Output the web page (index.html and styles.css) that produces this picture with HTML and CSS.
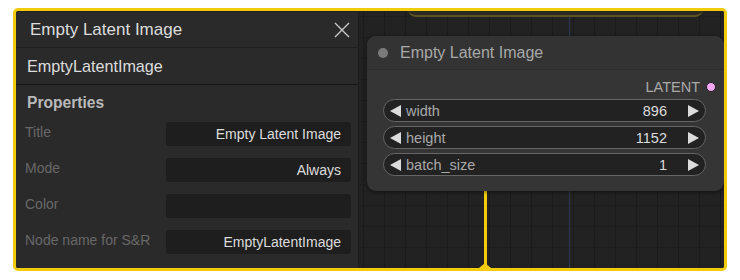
FILE: index.html
```html
<!DOCTYPE html>
<html>
  <head>
    <title>Empty Latent Image</title>
    <link rel="stylesheet" href="styles.css">
  </head>
  <body>
    <div class="frame">
      <div class="panel">
        <div class="panel-head">
          <span class="panel-title">Empty Latent Image</span>
          <svg class="close" width="16" height="16" viewBox="0 0 16 16">
            <path d="M1 1 L15 15 M15 1 L1 15" stroke="#c8c8c8" stroke-width="1.4" fill="none"/>
          </svg>
        </div>
        <div class="panel-type">EmptyLatentImage</div>
        <div class="panel-section">Properties</div>
        <div class="prop-list">
          <div class="prop-row">
            <div class="prop-label">Title</div>
            <div class="prop-value">Empty Latent Image</div>
          </div>
          <div class="prop-row">
            <div class="prop-label">Mode</div>
            <div class="prop-value">Always</div>
          </div>
          <div class="prop-row">
            <div class="prop-label">Color</div>
            <div class="prop-value"></div>
          </div>
          <div class="prop-row">
            <div class="prop-label">Node name for S&amp;R</div>
            <div class="prop-value">EmptyLatentImage</div>
          </div>
        </div>
      </div>

      <div class="canvas">
        <div class="axis"></div>
        <div class="other-node"></div>
        <div class="link"></div>
        <div class="link-tip"></div>

        <div class="node">
          <div class="node-head">
            <span class="node-dot"></span>
            <span class="node-title">Empty Latent Image</span>
          </div>
          <div class="node-body">
            <div class="output-row">
              <span>LATENT</span>
              <span class="slot"></span>
            </div>
            <div class="widget">
              <svg class="arrow" width="11" height="12" viewBox="0 0 11 12"><path d="M0 6 L11 0 L11 12 Z" fill="#dcdcdc"/></svg>
              <span class="w-name">width</span>
              <span class="w-value">896</span>
              <svg class="arrow right" width="11" height="12" viewBox="0 0 11 12"><path d="M11 6 L0 0 L0 12 Z" fill="#dcdcdc"/></svg>
            </div>
            <div class="widget">
              <svg class="arrow" width="11" height="12" viewBox="0 0 11 12"><path d="M0 6 L11 0 L11 12 Z" fill="#dcdcdc"/></svg>
              <span class="w-name">height</span>
              <span class="w-value">1152</span>
              <svg class="arrow right" width="11" height="12" viewBox="0 0 11 12"><path d="M11 6 L0 0 L0 12 Z" fill="#dcdcdc"/></svg>
            </div>
            <div class="widget">
              <svg class="arrow" width="11" height="12" viewBox="0 0 11 12"><path d="M0 6 L11 0 L11 12 Z" fill="#dcdcdc"/></svg>
              <span class="w-name">batch_size</span>
              <span class="w-value">1</span>
              <svg class="arrow right" width="11" height="12" viewBox="0 0 11 12"><path d="M11 6 L0 0 L0 12 Z" fill="#dcdcdc"/></svg>
            </div>
          </div>
        </div>
      </div>
    </div>
  </body>
</html>
```

FILE: styles.css
```css
body {
  margin: 0;
  background-color: #ffffff;
  font-family: "Liberation Sans", Arial, Helvetica, sans-serif;
}

/* yellow selection frame around the whole shot */
.frame {
  margin: 8px 0 0 13px;
  width: 714px;
  height: 263px;
  box-sizing: border-box;
  border: 3px solid #f2cc0c;
  border-radius: 5px;
  display: flex;
  overflow: hidden;
  background-color: #212121;
}

/* Properties panel on the left */
.panel {
  width: 342px;
  flex-shrink: 0;
  margin-top: 1px;
  background-color: #2a2a2a;
  color: #dddddd;
  display: flex;
  flex-direction: column;
  border-right: 1px solid #1c1c1c;
}

.panel-head {
  height: 35px;
  display: flex;
  align-items: center;
  justify-content: space-between;
  padding: 0 8px 0 14px;
  border-bottom: 1px solid #1e1e1e;
}

.panel-title {
  font-size: 17px;
  color: #dddddd;
}

.close {
  display: block;
}

.panel-type {
  height: 36px;
  display: flex;
  align-items: center;
  padding-left: 11px;
  font-size: 16.2px;
  color: #dddddd;
  border-bottom: 1px solid #161616;
}

.panel-section {
  height: 36px;
  display: flex;
  align-items: center;
  padding-left: 11px;
  font-size: 15.6px;
  font-weight: bold;
  color: #b9b9b9;
}

.prop-list {
  display: flex;
  flex-direction: column;
  gap: 12px;
  padding: 1px 7px 0 9px;
}

.prop-row {
  display: flex;
  height: 24px;
}

.prop-label {
  width: 141px;
  font-size: 14px;
  color: #686868;
  margin-top: 2px;
}

.prop-value {
  flex: 1;
  background-color: #1e1e1e;
  border-radius: 3px;
  font-size: 14px;
  color: #dddddd;
  text-align: right;
  padding-right: 10px;
  line-height: 24px;
}

/* node graph canvas */
.canvas {
  flex: 1;
  position: relative;
  background-color: #222222;
  background-image:
    linear-gradient(90deg, #1b1b1b 1px, transparent 1px),
    linear-gradient(0deg, #1d1d1d 1px, transparent 1px);
  background-size: 21px 21px, 21px 21px;
  background-position: 4px 0, 0 6px;
}

.axis {
  position: absolute;
  left: 210px;
  top: 0;
  bottom: 0;
  width: 1px;
  background-color: #2b3a52;
}

.other-node {
  position: absolute;
  left: 49px;
  top: -20px;
  width: 295px;
  height: 24px;
  background-color: #2a2a22;
  border-bottom: 2px solid #5c5420;
  border-radius: 0 0 8px 8px;
}

.link {
  position: absolute;
  left: 125px;
  top: 170px;
  bottom: 0;
  width: 3px;
  background-color: #f2cc0c;
}

.link-tip {
  position: absolute;
  left: 120px;
  bottom: 0;
  width: 0;
  height: 0;
  border-left: 6px solid transparent;
  border-right: 6px solid transparent;
  border-bottom: 5px solid #f2cc0c;
}

.node {
  position: absolute;
  left: 8px;
  top: 25px;
  width: 357px;
  height: 155px;
  background-color: #353535;
  border-radius: 9px;
  box-shadow: 0 1px 4px rgba(0, 0, 0, 0.5);
  overflow: hidden;
}

.node-head {
  height: 33px;
  display: flex;
  align-items: center;
  background-color: #333333;
  border-bottom: 1px solid #2c2c2c;
}

.node-dot {
  width: 10px;
  height: 10px;
  border-radius: 50%;
  background-color: #7a7a7a;
  margin: 0 12px 0 11px;
}

.node-title {
  font-size: 16px;
  color: #a9a9a9;
}

.node-body {
  padding: 0 18px 0 16px;
}

.output-row {
  height: 29px;
  box-sizing: border-box;
  padding-top: 4px;
  display: flex;
  align-items: center;
  justify-content: flex-end;
  font-size: 14.5px;
  color: #a9a9a9;
  margin-right: -10px;
}

.slot {
  width: 8px;
  height: 8px;
  border-radius: 50%;
  background-color: #f5a6f5;
  border: 1px solid #222;
  margin-left: 6px;
}

.widget {
  height: 23px;
  box-sizing: border-box;
  border: 1px solid #666666;
  border-radius: 12px;
  background-color: #222222;
  display: flex;
  align-items: center;
  padding: 0 6px 0 6px;
  margin-bottom: 4px;
  font-size: 14.5px;
}

.arrow {
  display: block;
  flex-shrink: 0;
}

.w-name {
  margin-left: 5px;
  color: #a9a9a9;
  flex: 1;
}

.w-value {
  color: #dddddd;
  margin-right: 21px;
}
```
